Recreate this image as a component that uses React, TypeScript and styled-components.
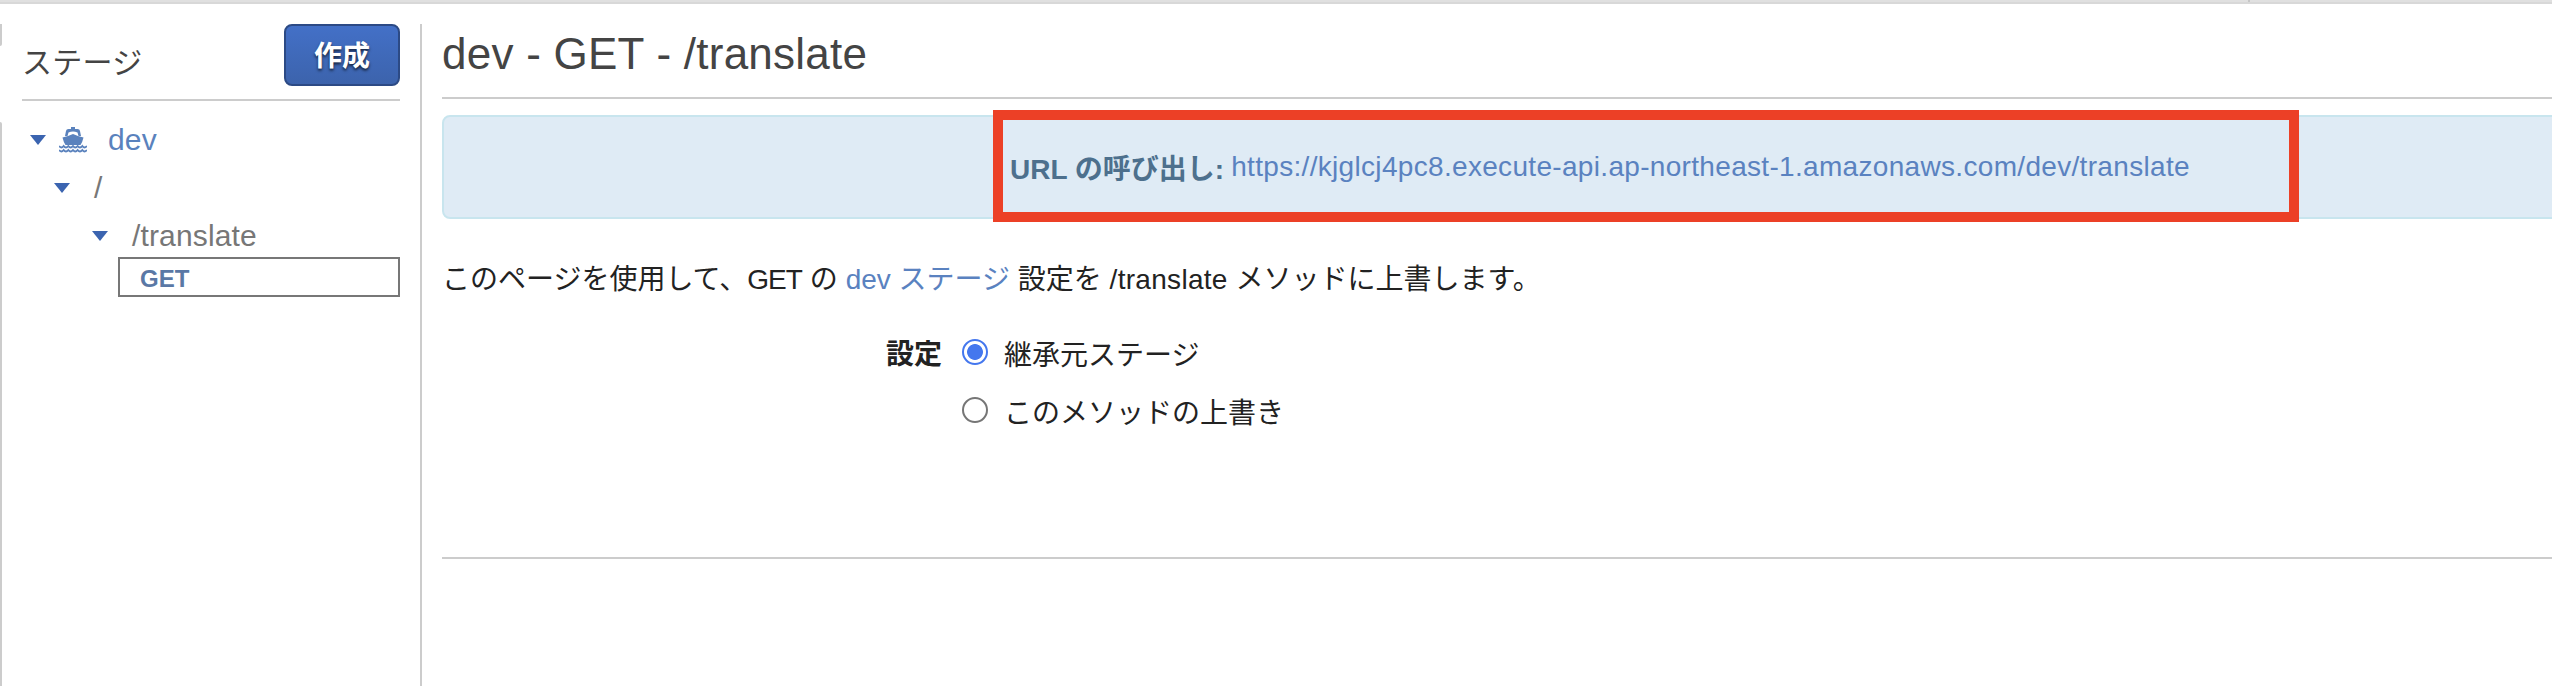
import React from "react";
import styled, { createGlobalStyle } from "styled-components";

const Global = createGlobalStyle`
  * { box-sizing: border-box; }
  body {
    margin: 0;
    background: #fff;
    color: #222;
    font-family: "Liberation Sans", "Noto Sans CJK JP", sans-serif;
    font-size: 28px;
    overflow: hidden;
  }
`;

const Page = styled.div`
  height: 686px;
  width: 100%;
  display: flex;
  flex-direction: column;
  overflow: hidden;
`;

const TopBar = styled.div`
  height: 4px;
  flex: none;
  background: #e0e0e0;
  border-bottom: 2px solid #d8d8d8;
  padding-left: 2248px;
`;

const TopTick = styled.div`
  width: 2px;
  height: 2px;
  background: #c6c6c6;
`;

const Body = styled.div`
  flex: 1;
  display: flex;
  padding-top: 20px;
  min-height: 0;
`;

const Rail = styled.div`
  width: 2px;
  display: flex;
  flex-direction: column;
  gap: 76px;
`;

const RailPart = styled.div<{ $first?: boolean }>`
  background: #ccc;
  ${(p) => (p.$first ? "height: 22px; border-bottom-right-radius: 2px;" : "flex: 1; border-top-right-radius: 2px;")}
`;

const Sidebar = styled.aside`
  width: 420px;
  border-right: 2px solid #ccc;
  padding: 0 20px;
`;

const SidebarHeader = styled.header`
  display: flex;
  justify-content: space-between;
  height: 77px;
  border-bottom: 2px solid #ccc;
`;

const SidebarTitle = styled.h2`
  margin: 0;
  padding-top: 16px;
  font-size: 30px;
  line-height: 46px;
  font-weight: 400;
  letter-spacing: 0.3px;
  color: #444;
`;

const CreateButton = styled.button`
  width: 116px;
  height: 62px;
  padding: 0 0 2px;
  border: 2px solid #2c4a85;
  border-radius: 8px;
  background: linear-gradient(#4370c7, #3c63ac);
  color: #fff;
  font: bold 28px/40px "Noto Sans CJK JP", sans-serif;
  text-shadow: 0 2px 3px rgba(0, 0, 0, 0.7);
`;

const Tree = styled.div`
  padding-top: 16px;
`;

const TreeRow = styled.div<{ $indent: number; $link?: boolean }>`
  display: flex;
  align-items: center;
  height: 48px;
  padding-left: ${(p) => p.$indent}px;
  font-size: 30px;
  color: ${(p) => (p.$link ? "#5a82bd" : "#777")};
`;

const Caret = styled.span`
  border: 8.5px solid transparent;
  border-top: 10px solid #3b64b0;
  border-bottom: 0;
  margin-right: 13px;
  margin-top: -2px;
`;

const Ship = styled.svg`
  width: 28px;
  height: 26px;
  margin-right: 21px;
  margin-top: -3px;
`;

const TreeLabel = styled.span<{ $gap?: number }>`
  margin-left: ${(p) => p.$gap ?? 0}px;
  margin-top: -2px;
  line-height: 34px;
  letter-spacing: 0.15px;
`;

const SelectedMethod = styled.div`
  margin: -4px 0 0 96px;
  height: 40px;
  border: 2px solid #777;
  padding-left: 20px;
  font-size: 24px;
  line-height: 40px;
  font-weight: bold;
  color: #5a78a5;
`;

const Main = styled.main`
  flex: 1;
  min-width: 0;
  padding-left: 20px;
`;

const Heading = styled.h1`
  margin: 0;
  height: 75px;
  border-bottom: 2px solid #ccc;
  font-size: 44px;
  line-height: 60px;
  font-weight: 400;
  letter-spacing: 0.25px;
  color: #444;
`;

const Alert = styled.div`
  position: relative;
  margin-top: 16px;
  width: 2318px;
  height: 104px;
  border: 2px solid #c8e5ee;
  border-radius: 8px;
  background: #dfebf5;
  display: flex;
  padding-left: 566px;
  align-items: center;
  white-space: pre;
`;

const AlertLabel = styled.strong`
  color: #4d708d;
  margin-right: 7px;
`;

const Link = styled.a<{ $tracking?: number }>`
  color: #5a82c0;
  letter-spacing: ${(p) => p.$tracking ?? 0}px;
`;

const Highlight = styled.div`
  position: absolute;
  left: 549px;
  top: -7px;
  width: 1306px;
  height: 112px;
  border: 10px solid #ec4026;
`;

const Description = styled.p`
  margin: 40px 0 0;
  line-height: 42px;
  white-space: pre;
`;

const Term = styled.span<{ $tracking: number }>`
  letter-spacing: ${(p) => p.$tracking}px;
`;

const Settings = styled.div`
  display: flex;
  padding-left: 444px;
  margin-top: 23px;
  height: 235px;
  border-bottom: 2px solid #ccc;
`;

const SettingsLabel = styled.strong`
  width: 76px;
  line-height: 62px;
`;

const Option = styled.label`
  display: flex;
  align-items: center;
  height: 58px;
  gap: 16px;
`;

const Radio = styled.span<{ $on?: boolean }>`
  width: 26px;
  height: 26px;
  margin-top: -2px;
  border-radius: 50%;
  border: 2px solid ${(p) => (p.$on ? "#4477ee" : "#767676")};
  background: ${(p) => (p.$on ? "radial-gradient(circle, #4477ee 7.5px, #fff 8.3px)" : "#fff")};
`;

export default function App() {
  return (
    <Page>
      <Global />
      <TopBar><TopTick /></TopBar>
      <Body>
        <Rail><RailPart $first /><RailPart /></Rail>
        <Sidebar>
          <SidebarHeader>
            <SidebarTitle>ステージ</SidebarTitle>
            <CreateButton>作成</CreateButton>
          </SidebarHeader>
          <Tree>
            <TreeRow $indent={8} $link>
              <Caret />
              <Ship viewBox="0 0 28 26" fill="#5a82bd">
                <path d="M6 9 7 4Q7.300 2 9.500 2H12V0h4v2h2.500Q20.700 2 21 4l1 5h-2.500l-1-3.500Q14 3.500 9.500 5.500L8.500 9z" />
                <path d="M3.500 10.500 9 9l5-2 5 2 5.500 1.500Q23.500 15 21.500 18H6.500Q4.500 15 3.500 10.500z" />
                <path d="M0 19q2.300 3 4.660 0q2.300 3 4.660 0q2.300 3 4.660 0q2.300 3 4.660 0q2.300 3 4.660 0q2.300 3 4.660 0M0 23q2.300 3 4.660 0q2.300 3 4.660 0q2.300 3 4.660 0q2.300 3 4.660 0q2.300 3 4.660 0q2.300 3 4.660 0" fill="none" stroke="#5a82bd" strokeWidth="1.800" />
              </Ship>
              <TreeLabel>dev</TreeLabel>
            </TreeRow>
            <TreeRow $indent={32}><Caret /><TreeLabel $gap={11}>/</TreeLabel></TreeRow>
            <TreeRow $indent={70}><Caret /><TreeLabel $gap={11}>/translate</TreeLabel></TreeRow>
            <SelectedMethod>GET</SelectedMethod>
          </Tree>
        </Sidebar>
        <Main>
          <Heading>dev - GET - /translate</Heading>
          <Alert>
            <AlertLabel>URL の呼び出し:</AlertLabel>
            <Link $tracking={0.32}>https://kjglcj4pc8.execute-api.ap-northeast-1.amazonaws.com/dev/translate</Link>
            <Highlight />
          </Alert>
          <Description>
            このページを使用して、<Term $tracking={-0.9}>GET</Term> の <Link>dev ステージ</Link> 設定を <Term $tracking={0.3}>/translate</Term> メソッドに上書します。
          </Description>
          <Settings>
            <SettingsLabel>設定</SettingsLabel>
            <div>
              <Option><Radio $on />継承元ステージ</Option>
              <Option><Radio />このメソッドの上書き</Option>
            </div>
          </Settings>
        </Main>
      </Body>
    </Page>
  );
}
